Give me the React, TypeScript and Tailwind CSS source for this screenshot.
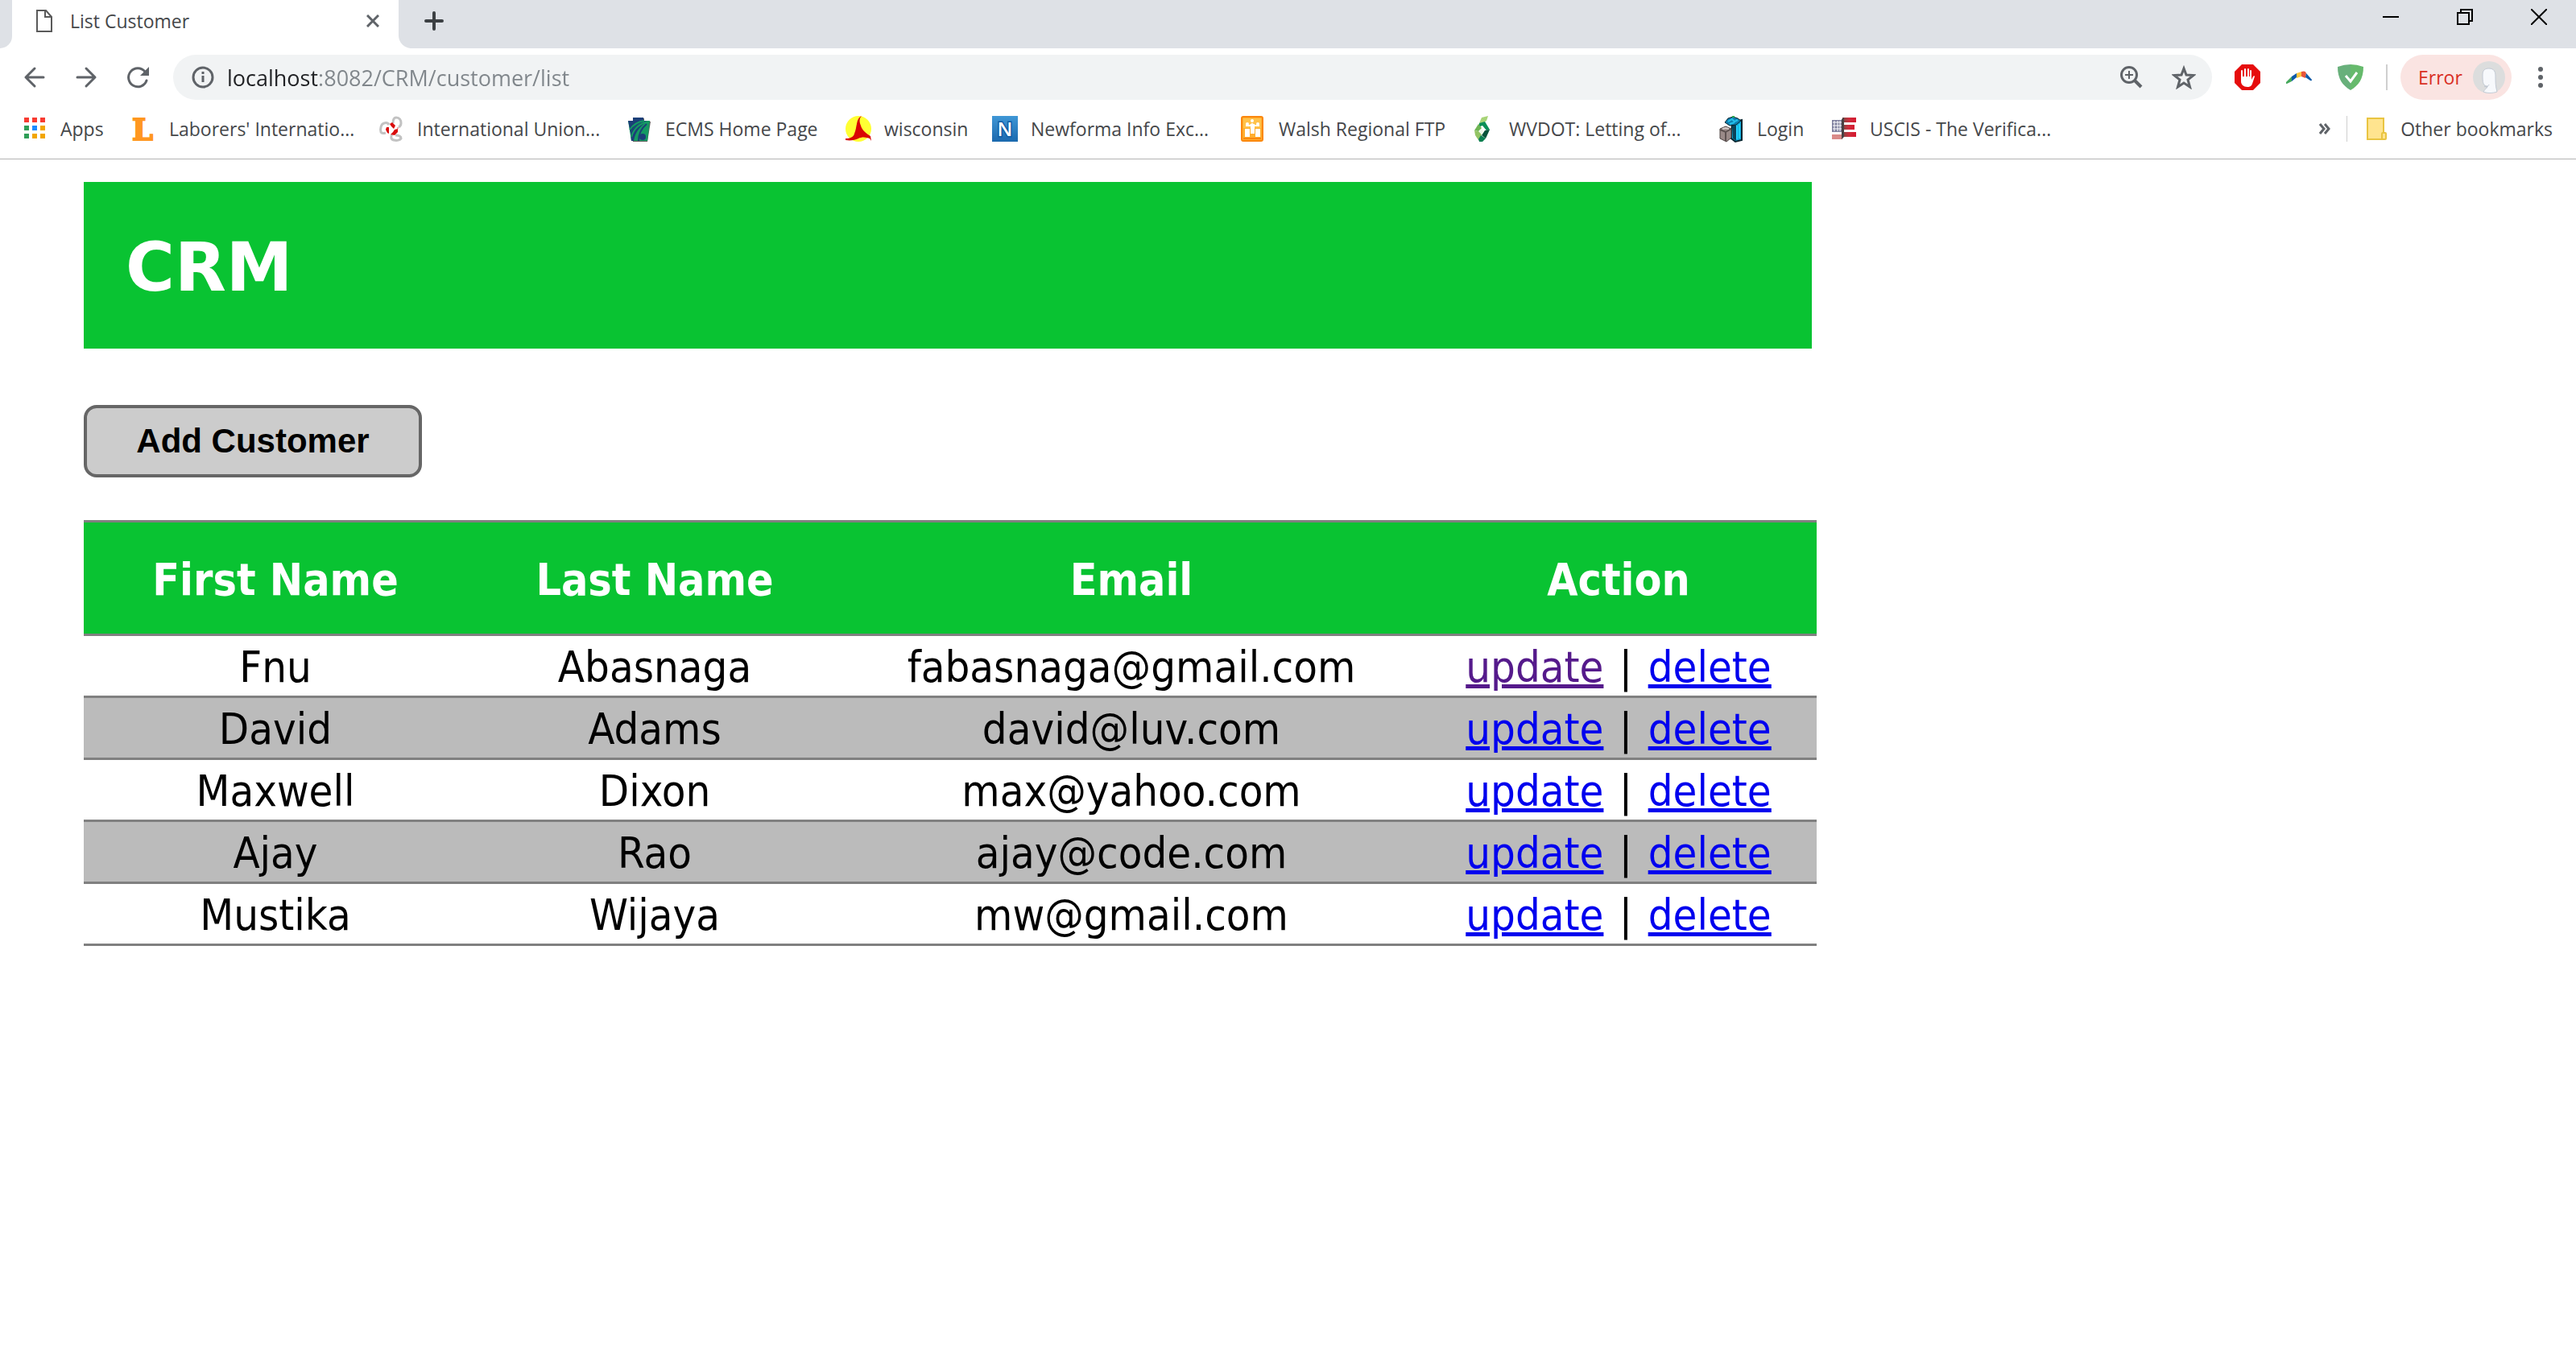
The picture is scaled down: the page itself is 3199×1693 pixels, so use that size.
import React from "react";

type Bookmark = { label: string; width: string; icon: React.ReactNode };

const box = "size-8 shrink-0 overflow-visible";

const AppsIcon = () => (
  <svg viewBox="0 0 32 32" className={box}>
    <g fill="#f83b31"><rect x="3" y="2" width="6" height="6" /><rect x="13" y="2" width="6" height="6" /><rect x="23" y="2" width="6" height="6" /></g>
    <g fill="#2f9e57"><rect x="3" y="12" width="6" height="6" /><rect x="3" y="22" width="6" height="6" /></g>
    <rect x="13" y="12" width="6" height="6" fill="#1a8cff" />
    <g fill="#f2a600"><rect x="23" y="12" width="6" height="6" /><rect x="13" y="22" width="6" height="6" /><rect x="23" y="22" width="6" height="6" /></g>
  </svg>
);

const LaborersIcon = () => (
  <svg viewBox="0 0 32 32" className={box}>
    <text x="15" y="30" textAnchor="middle" fontSize="37" fontWeight="700" fontFamily="DejaVu Serif" fill="#ff9720" stroke="#ff9720" strokeWidth="2">L</text>
  </svg>
);

const UnionIcon = () => (
  <svg viewBox="0 0 32 32" className={box}>
    <g fill="none" stroke="#c2c2c2" strokeWidth="3">
      <path d="M18 9c0-4 1-7 4-7 4 0 6 3 6 7 0 2-1 4-3 5" />
      <path d="M9 21c-3 1-5 1-6-1-1-4 0-10 4-11 3-1 5 0 6 2" />
      <path d="M17 23c-2 2-2 6 2 7 4 1 8 0 9-2 0-3-3-4-7-4" />
    </g>
    <g fill="#d90b0b">
      <path d="M14 10l3-2 4 4-2 4-3-3z" />
      <path d="M10 14l3 0v8l-2-1-2-4z" />
      <path d="M20 17l4-1v4l-4 4-5-1 3-3z" />
    </g>
    <circle cx="24" cy="15" r="1" fill="#e58a8a" />
  </svg>
);

const EcmsIcon = () => (
  <svg viewBox="0 0 32 32" className={box}>
    <path d="M3 7h6V3h13v4h8l-4 25H8z" fill="#2b2b25" opacity=".75" />
    <path d="M2 6h6V2h13v4h8l-3 25H6z" fill="#159a63" />
    <path d="M2 6h6V2h13v4h5C16 8 9 13 5 21z" fill="#1c3f78" />
    <path d="M5 21C10 12 18 7 28 7c-10 4-17 12-19 24H6z" fill="#1c3f78" />
    <path d="M4 17C9 10 15 7 22 6M6 26C9 16 17 9 28 7" fill="none" stroke="#159a63" strokeWidth="2" />
    <path d="M28 7c-10 5-15 14-16 24" fill="none" stroke="#159a63" strokeWidth="2" />
    <path d="M25 10c-6 5-10 12-10 21" fill="none" stroke="#1c3f78" strokeWidth="2" />
    <circle cx="20" cy="26" r="4" fill="#1c3f78" />
  </svg>
);

const WisconsinIcon = () => (
  <svg viewBox="0 0 32 32" className={box}>
    <circle cx="16" cy="16" r="16" fill="#ffff33" />
    <path d="M20 0c-3 3-3 7-1 12 1 4 4 8 12 13l1 6-2-3c-5-2-10-2-14 0-4 2-10 3-16 2v-2c6 0 10-2 11-6 2-5 2-8 3-12 1-5 2-8 6-10z" fill="#d90404" />
  </svg>
);

const NewformaIcon = () => (
  <svg viewBox="0 0 32 32" className={box}>
    <defs>
      <linearGradient id="newforma" x1="0" y1="0" x2="0" y2="1"><stop offset="0" stopColor="#3f97d6" /><stop offset="1" stopColor="#1b69ae" /></linearGradient>
    </defs>
    <rect width="32" height="32" fill="url(#newforma)" />
    <text x="16" y="25" textAnchor="middle" fontSize="24" fontWeight="600" fontFamily="Open Sans" fill="#fff" stroke="#0f5da5" strokeWidth="3" paintOrder="stroke">N</text>
  </svg>
);

const WalshIcon = () => (
  <svg viewBox="0 0 32 32" className={box}>
    <rect x="2" y="1" width="26" height="30" rx="2" fill="#ffae2e" stroke="#fb870d" strokeWidth="2" />
    <rect x="4" y="3" width="22" height="12" fill="#ffc24a" />
    <g fill="#fff">
      <rect x="6" y="16" width="6" height="10" /><rect x="19" y="16" width="6" height="10" />
      <rect x="13" y="10" width="5" height="12" /><circle cx="15" cy="6" r="2" />
      <circle cx="9" cy="10" r="2" /><circle cx="22" cy="10" r="2" />
    </g>
    <path d="M7 12h5l3-2 3 2h6" fill="none" stroke="#fff" strokeWidth="2" />
    <rect x="4" y="27" width="22" height="2" fill="#fb870d" />
  </svg>
);

const WvdotIcon = () => (
  <svg viewBox="0 0 32 32" className={box}>
    <path d="M14 2l8-2-2 6-5 3-4 0z" fill="#a8d477" />
    <path d="M11 9l7-2 6 10-4 1-5-6-5 2z" fill="#0a8f57" />
    <path d="M10 10l4 5-4 4-5-1z" fill="#6fb553" />
    <path d="M5 18l5 1 4 4-4 7-4-6z" fill="#93c464" />
    <path d="M24 17l-5 11-5-4 4-6z" fill="#06533a" />
    <path d="M10 29l3-5 6 4-4 4h-4z" fill="#0a7f50" />
    <path d="M14 16l3 3-3 4-3-4z" fill="#eef7ea" />
  </svg>
);

const LoginIcon = () => (
  <svg viewBox="0 0 32 32" className={box}>
    <path d="M17 8l12-3v25l-8 2-5-4z" fill="#10a9d8" stroke="#06242e" strokeWidth="2" />
    <path d="M18 10l4 2v19l-4-3z" fill="#0a4258" />
    <path d="M23 12v17M26 10v18" stroke="#22d3ff" strokeWidth="2" />
    <path d="M8 8l4-5 6-2 6 2 4 3-6 5-8 1z" fill="#0e7fb0" stroke="#06242e" strokeWidth="1" />
    <path d="M12 7l5-3 3 3 4-2M14 10l6-2" stroke="#23c1ec" strokeWidth="2" fill="none" />
    <path d="M2 16l7-3 7 3v11l-6 5-8-4z" fill="#9a8a88" stroke="#4a403f" strokeWidth="1" />
    <path d="M2 17l7 3 7-4M9 20v11" stroke="#5c5150" strokeWidth="2" fill="none" />
    <path d="M5 16l4-1 4 1" stroke="#d4cccb" strokeWidth="2" fill="none" />
    <rect x="17" y="0" width="3" height="2" fill="#2ca84a" />
  </svg>
);

const UscisIcon = () => (
  <svg viewBox="0 0 32 32" className={box}>
    <defs>
      <linearGradient id="stripe" x1="0" x2="1"><stop offset="0" stopColor="#7b4a44" /><stop offset=".5" stopColor="#d02c3c" /><stop offset="1" stopColor="#d4172f" /></linearGradient>
    </defs>
    <rect x="1" y="5" width="13" height="15" fill="#7d7f9d" />
    <path d="M2 8h11M2 12h11M2 16h11M4 6v13M8 6v13M11 6v13" stroke="#fff" strokeWidth="1" />
    <rect x="1" y="23" width="13" height="6" fill="#d98a88" />
    <rect x="14" y="2" width="17" height="6" fill="url(#stripe)" />
    <rect x="14" y="11" width="15" height="6" fill="url(#stripe)" />
    <rect x="14" y="20" width="17" height="6" fill="url(#stripe)" />
    <path d="M13 4l3-2v24l-3 3z" fill="#4a4143" />
  </svg>
);

const bookmarks: Bookmark[] = [
  { label: "Apps", width: "w-[55px]", icon: <AppsIcon /> },
  { label: "Laborers' Internatio...", width: "w-[228px]", icon: <LaborersIcon /> },
  { label: "International Union...", width: "w-[228px]", icon: <UnionIcon /> },
  { label: "ECMS Home Page", width: "w-[192px]", icon: <EcmsIcon /> },
  { label: "wisconsin", width: "w-[102px]", icon: <WisconsinIcon /> },
  { label: "Newforma Info Exc...", width: "w-[228px]", icon: <NewformaIcon /> },
  { label: "Walsh Regional FTP", width: "w-[206px]", icon: <WalshIcon /> },
  { label: "WVDOT: Letting of...", width: "w-[228px]", icon: <WvdotIcon /> },
  { label: "Login", width: "w-[60px]", icon: <LoginIcon /> },
  { label: "USCIS - The Verifica...", width: "w-[228px]", icon: <UscisIcon /> },
];

const customers = [
  { first: "Fnu", last: "Abasnaga", email: "fabasnaga@gmail.com", visited: true },
  { first: "David", last: "Adams", email: "david@luv.com", visited: false },
  { first: "Maxwell", last: "Dixon", email: "max@yahoo.com", visited: false },
  { first: "Ajay", last: "Rao", email: "ajay@code.com", visited: false },
  { first: "Mustika", last: "Wijaya", email: "mw@gmail.com", visited: false },
];

function TabStrip() {
  return (
    <div className="flex h-[60px] items-stretch">
      <div className="w-[15px] rounded-br-2xl bg-[#dee1e6]" />
      <div className="flex w-[480px] items-start pl-[30px] pr-6">
        <svg viewBox="0 0 20 28" className="mt-3 h-7 w-5" fill="none" stroke="#5a5a5a" strokeWidth="2">
          <path d="M1 1h11l7 8v18H1z" />
          <path d="M11 1v8h8" />
        </svg>
        <span className="ml-[22px] mt-[10px] flex-1 text-[23px] leading-8 text-[#45474a]">List Customer</span>
        <button aria-label="Close tab" className="mt-[18px]">
          <svg viewBox="0 0 16 16" className="size-4" stroke="#5f6368" strokeWidth="3"><path d="M1 1l14 14M15 1L1 15" /></svg>
        </button>
      </div>
      <div className="flex flex-1 items-start justify-between rounded-bl-2xl bg-[#dee1e6] pl-8">
        <button aria-label="New tab" className="mt-[14px]">
          <svg viewBox="0 0 24 24" className="size-6" stroke="#3c4043" strokeWidth="4" strokeLinecap="round"><path d="M12 2v20M2 12h20" /></svg>
        </button>
        <div className="flex h-[42px]">
          <button aria-label="Minimize" className="grid w-[92px] place-items-center">
            <svg viewBox="0 0 20 20" className="size-5"><rect y="9" width="20" height="2" /></svg>
          </button>
          <button aria-label="Restore" className="grid w-[92px] place-items-center">
            <svg viewBox="0 0 20 20" className="size-5" fill="none" stroke="#000" strokeWidth="2"><path d="M1 5h14v14H1zM5 5V1h14v14h-4" /></svg>
          </button>
          <button aria-label="Close window" className="grid w-[92px] place-items-center">
            <svg viewBox="0 0 20 20" className="size-5" stroke="#000" strokeWidth="2"><path d="M0 0l20 20M20 0L0 20" /></svg>
          </button>
        </div>
      </div>
    </div>
  );
}

function Toolbar() {
  return (
    <div className="flex h-[72px] items-center pl-[27px]">
      <div className="mr-7 flex gap-8">
        <button aria-label="Back">
          <svg viewBox="0 0 32 32" className="size-8" fill="none" stroke="#5f6368" strokeWidth="3" strokeLinecap="round" strokeLinejoin="round"><path d="M27 16H5M16 5L5 16l11 11" /></svg>
        </button>
        <button aria-label="Forward">
          <svg viewBox="0 0 32 32" className="size-8" fill="none" stroke="#5f6368" strokeWidth="3" strokeLinecap="round" strokeLinejoin="round"><path d="M5 16h22M16 5l11 11-11 11" /></svg>
        </button>
        <button aria-label="Reload">
          <svg viewBox="0 0 32 32" className="size-8"><path d="M27 20A11.5 11.5 0 1 1 25 9" fill="none" stroke="#5f6368" strokeWidth="3" strokeLinecap="round" /><path d="M30 3v11H19z" fill="#5f6368" /></svg>
        </button>
      </div>
      <div className="flex h-14 flex-1 items-center rounded-full bg-[#f1f3f4] pl-[23px] pr-5">
        <svg viewBox="0 0 28 28" className="size-7" fill="none" stroke="#5f6368" strokeWidth="3"><circle cx="14" cy="14" r="12" /><path d="M14 12v8M14 7v3" /></svg>
        <input
          aria-label="Address"
          defaultValue="localhost:8082/CRM/customer/list"
          className="ml-4 h-12 flex-1 bg-[linear-gradient(90deg,#202124_112px,#80868b_112px)] bg-clip-text text-[27px] text-transparent outline-none"
        />
        <button aria-label="Zoom" className="mr-9">
          <svg viewBox="0 0 28 28" className="size-7" fill="none" stroke="#5f6368"><circle cx="11" cy="11" r="9.5" strokeWidth="3" /><path d="M11 6v10M6 11h10" strokeWidth="2" /><path d="M18 18l8 8" strokeWidth="4" /></svg>
        </button>
        <button aria-label="Bookmark this page">
          <svg viewBox="0 0 30 30" className="size-[30px]" fill="none" stroke="#5f6368" strokeWidth="3"><path d="M15 4l3 8 9 .5-7 5.500 2.500 9L15 22l-7.500 5L10 18l-7-5.500 9-.5z" /></svg>
        </button>
      </div>
      <div className="ml-7 flex items-center gap-8">
        <button aria-label="Ad blocker">
          <svg viewBox="0 0 32 32" className="size-8">
            <path d="M9 0h14l9 9v14l-9 9H9l-9-9V9z" fill="#e60d0d" />
            <path d="M9 20V8M13 18V6M17 18V6M20 19V8" fill="none" stroke="#fff" strokeWidth="2" strokeLinecap="round" />
            <path d="M8 15h13v4l2-4c1-1 2-1 2 0l-3 9c-1 3-3 4-6 4-5 0-8-3-8-7z" fill="#fff" />
          </svg>
        </button>
        <button aria-label="Boomerang">
          <svg viewBox="0 0 32 32" className="size-8">
            <path d="M0 22l7-7v6l-6 3q-2 0-1-2z" fill="#44a85b" />
            <path d="M7 15l6-4v5l-6 5z" fill="#0d5aa8" />
            <path d="M13 11l6-2v6l-6 2z" fill="#ffc63f" />
            <path d="M19 9c3-1 5-1 6 2l-1 6-5-2z" fill="#e8553b" />
            <path d="M25 11l7 8q0 2-2 1l-6-4z" fill="#0d5aa8" />
          </svg>
        </button>
        <button aria-label="Protection">
          <svg viewBox="0 0 32 32" className="size-8">
            <path d="M0 3Q8 0 16 0v32C6 26 0 18 0 3z" fill="#68b07b" />
            <path d="M32 3Q24 0 16 0v32C26 26 32 18 32 3z" fill="#66ba6c" />
            <path d="M10 14l6 7 8-11" fill="none" stroke="#fff" strokeWidth="3" />
          </svg>
        </button>
      </div>
      <div className="ml-7 h-8 w-0.5 bg-[#cfcfcf]" />
      <button className="ml-4 flex h-14 w-[138px] items-center justify-between rounded-full bg-[#fae4e2] pl-[22px] pr-2 text-[23px] text-[#d93025]">
        Error
        <svg viewBox="0 0 40 40" className="size-10">
          <circle cx="20" cy="20" r="20" fill="#dcdddd" />
          <path d="M12 17c0-6 3-8 8-8 6 0 8 4 8 9 0 8 0 13 2 20-6 2-12 2-17 0 1-3 5-4 5-7-2 0-4-1-5-3-1-3-1-7-1-11z" fill="#f7f9fc" stroke="#c3cad4" strokeWidth="1" />
          <path d="M14 31c3 2 5 0 6-2" fill="none" stroke="#bcc4cf" strokeWidth="1" />
        </svg>
      </button>
      <button aria-label="Menu" className="ml-5 mr-7">
        <svg viewBox="0 0 32 32" className="size-8" fill="#5f6368"><circle cx="16" cy="6" r="3" /><circle cx="16" cy="16" r="3" /><circle cx="16" cy="26" r="3" /></svg>
      </button>
    </div>
  );
}

function BookmarksBar() {
  return (
    <nav aria-label="Bookmarks" className="flex h-[66px] items-start justify-between border-b border-[#b4b4b4] pl-[27px] pr-[29px] text-[23px] leading-8 text-[#45474a]">
      <div className="mt-3 flex gap-8">
        {bookmarks.map((b) => (
          <a key={b.label} href="#" className="flex items-center gap-4">
            {b.icon}
            <span className={"whitespace-nowrap " + b.width}>{b.label}</span>
          </a>
        ))}
      </div>
      <div className="mt-3 flex items-center">
        <button aria-label="More bookmarks">
          <svg viewBox="0 0 14 14" className="size-[14px]" fill="none" stroke="#5f6368" strokeWidth="3"><path d="M1 1l5 6-5 6M7 1l5 6-5 6" /></svg>
        </button>
        <div className="ml-5 h-8 w-px bg-[#cfcfcf]" />
        <a href="#" className="ml-6 flex items-center gap-4">
          <svg viewBox="0 0 26 28" className="h-7 w-[26px]" fill="#ffe48f" stroke="#e9c441" strokeWidth="2"><path d="M1 1h20v26H1z" /><rect x="19" y="19" width="5" height="8" rx="1" /></svg>
          Other bookmarks
        </a>
      </div>
    </nav>
  );
}

const head = "h-[141px] border-y-[3px] border-[#808080] pt-1 text-center text-[55px] font-bold leading-[68px] text-white";
const cell = "h-[77px] border-y-[3px] border-[#808080] pt-1 text-center leading-[68px]";

function CustomerTable() {
  return (
    <table className="mt-[53px] w-full max-w-[2152px] table-fixed border-collapse text-[54px] text-black">
      <colgroup>
        <col className="w-[476px]" />
        <col className="w-[466px]" />
        <col className="w-[718px]" />
        <col className="w-[492px]" />
      </colgroup>
      <thead>
        <tr className="bg-[#09c332]">
          <th className={head}>First Name</th>
          <th className={head}>Last Name</th>
          <th className={head}>Email</th>
          <th className={head}>Action</th>
        </tr>
      </thead>
      <tbody>
        {customers.map((c) => (
          <tr key={c.email} className="even:bg-[#bbbbbb]">
            <td className={cell}>{c.first}</td>
            <td className={cell}>{c.last}</td>
            <td className={cell}>{c.email}</td>
            <td className={cell}>
              <a href="#" className={c.visited ? "text-[#551a8b] underline" : "text-[#0000ee] underline"}>update</a>
              <span className="mx-1"> | </span>
              <a href="#" className="text-[#0000ee] underline">delete</a>
            </td>
          </tr>
        ))}
      </tbody>
    </table>
  );
}

export default function App() {
  return (
    <div className="min-h-screen bg-white">
      <header className="font-['Open_Sans',sans-serif]">
        <TabStrip />
        <Toolbar />
        <BookmarksBar />
      </header>
      <main className="pl-[104px] pt-7 font-['DejaVu_Sans_Condensed','DejaVu_Sans',sans-serif]">
        <div className="flex h-[207px] w-full max-w-[2146px] items-center bg-[#09c332] pl-[52px] pt-2">
          <h1 className="font-['DejaVu_Sans',sans-serif] text-[83px] font-bold text-white">CRM</h1>
        </div>
        <button className="mt-[70px] block h-[90px] w-[420px] rounded-2xl border-4 border-[#666666] bg-[#cccccc] font-['Liberation_Sans',sans-serif] text-[42px] font-bold leading-none text-black">
          Add Customer
        </button>
        <CustomerTable />
      </main>
    </div>
  );
}
